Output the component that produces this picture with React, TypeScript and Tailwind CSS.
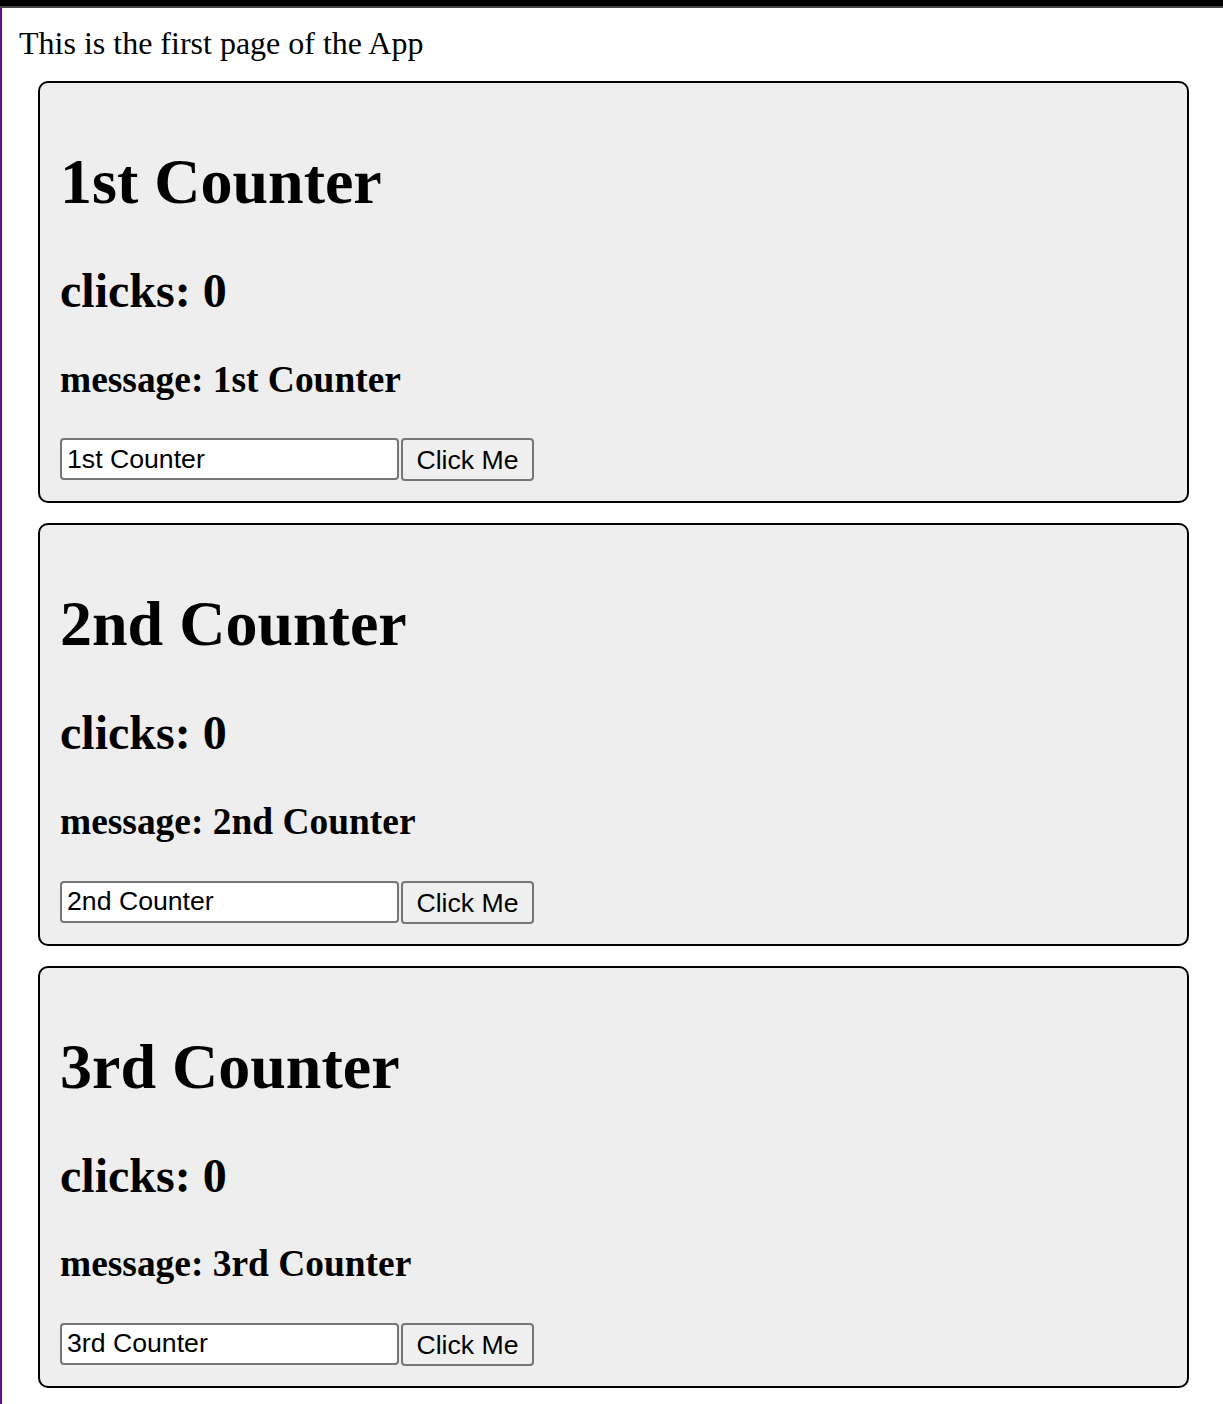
import React, { useState } from 'react';

const serif = "font-['Liberation_Serif','Times_New_Roman',serif]";
const sans = "font-['Liberation_Sans',Arial,sans-serif]";

const Counter: React.FC<{ title: string }> = ({ title }) => {
  const [clicks, setClicks] = useState(0);
  const [message, setMessage] = useState(title);

  return (
    <div className="mb-[20px] ml-[36px] mr-[34px] rounded-[10px] border-2 border-black bg-[#eeeeee] px-[20px] pt-[20px] pb-[20px]">
      <h1 className={`${serif} mt-[42px] mb-[44px] text-[64px] font-bold leading-[normal] text-black`}>{title}</h1>
      <h2 className={`${serif} mt-[39.84px] mb-[39.84px] text-[48px] font-bold leading-[normal] text-black`}>clicks: {clicks}</h2>
      <h3 className={`${serif} mt-[37.44px] mb-[37.44px] text-[37.44px] font-bold leading-[normal] text-black`}>message: {message}</h3>
      <div className="flex items-start gap-[2px]">
        <input
          type="text"
          value={message}
          onChange={(e) => setMessage(e.target.value)}
          className={`${sans} h-[42px] w-[339px] rounded-[4px] border-2 border-[#767676] bg-white px-[5px] text-[26.67px] text-black outline-none`}
        />
        <button
          onClick={() => setClicks(clicks + 1)}
          className={`${sans} h-[43px] w-[133px] rounded-[4px] border-2 border-[#767676] bg-[#efefef] text-[26.67px] text-black`}
        >
          Click Me
        </button>
      </div>
    </div>
  );
};

export default function App() {
  return (
    <div className="min-h-[1404px] bg-white">
      <div className="h-[6px] bg-black" />
      <div className="h-[2px] bg-[#454545]" />
      <div className="min-h-[1396px] border-l-2 border-[#6a0e8f] pt-[17px]">
        <p className={`${serif} mb-[19px] pl-[17px] text-[32px] leading-[normal] text-black`}>This is the first page of the App</p>
        <Counter title="1st Counter" />
        <Counter title="2nd Counter" />
        <Counter title="3rd Counter" />
      </div>
    </div>
  );
}
